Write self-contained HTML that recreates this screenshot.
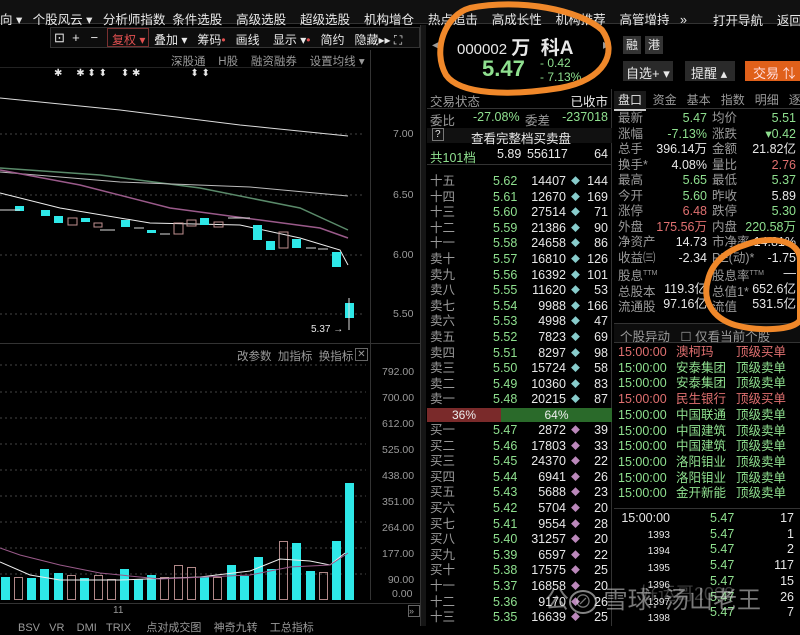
<!DOCTYPE html>
<html><head><meta charset="utf-8"><style>
*{margin:0;padding:0;box-sizing:border-box}
body{width:800px;height:626px;background:#000;overflow:hidden;position:relative;font-family:"Liberation Sans","Noto Sans CJK SC",sans-serif;font-size:12px;color:#ccc}
.a{position:absolute;white-space:nowrap}
.g{color:#8fe08f}.w{color:#e8e8e8}.gr{color:#9a9a9a}.r{color:#e07070}
.row{position:absolute;left:427px;width:185px;height:15px;font-size:12.5px}
.row span{position:absolute;top:0}
</style></head><body>
<!-- top menu -->
<div class="a" style="left:0;top:0;width:800px;height:24px;background:#111;border-bottom:1px solid #333"></div>
<div class="a w" style="left:0;top:9px;font-size:12.5px">向 ▾&nbsp;&nbsp;&nbsp;个股风云 ▾&nbsp;&nbsp;&nbsp;分析师指数&nbsp;&nbsp;条件选股&nbsp;&nbsp;&nbsp;&nbsp;高级选股&nbsp;&nbsp;&nbsp;&nbsp;超级选股&nbsp;&nbsp;&nbsp;&nbsp;机构增仓&nbsp;&nbsp;&nbsp;&nbsp;热点追击&nbsp;&nbsp;&nbsp;&nbsp;高成长性&nbsp;&nbsp;&nbsp;&nbsp;机构推荐&nbsp;&nbsp;&nbsp;&nbsp;高管增持&nbsp;&nbsp;&nbsp;»</div>
<div class="a w" style="left:713px;top:10px;font-size:12.5px">打开导航&nbsp;&nbsp;&nbsp;&nbsp;返回</div>
<!-- toolbar -->
<div class="a" style="left:50px;top:27px;width:370px;height:21px;border:1px solid #333;background:#0d0d0d"></div>
<div class="a w" style="left:54px;top:30px;font-size:13px">⊡&nbsp;&nbsp;+&nbsp;&nbsp;&nbsp;−</div>
<div class="a" style="left:107px;top:28px;width:42px;height:19px;border:1px solid #7a3030;color:#e05050;padding:2px 4px">复权 ▾</div>
<div class="a w" style="left:154px;top:31px">叠加 ▾&nbsp;&nbsp;&nbsp;筹码<span style="color:#e05050">•</span>&nbsp;&nbsp;&nbsp;画线&nbsp;&nbsp;&nbsp;&nbsp;显示 ▾<span style="color:#e05050">•</span>&nbsp;&nbsp;&nbsp;简约&nbsp;&nbsp;&nbsp;隐藏▸▸&nbsp;⛶</div>
<div class="a gr" style="left:171px;top:53px;font-size:11.5px">深股通&nbsp;&nbsp;&nbsp;&nbsp;H股&nbsp;&nbsp;&nbsp;&nbsp;融资融券&nbsp;&nbsp;&nbsp;&nbsp;设置均线 ▾</div>
<div class="a" style="left:0;top:67px;width:362px;border-top:1px solid #222"></div>
<div class="a w" style="left:54px;top:68px;font-size:10px">✱&nbsp;&nbsp;&nbsp;&nbsp;&nbsp;✱ ⬍ ⬍&nbsp;&nbsp;&nbsp;&nbsp;&nbsp;⬍ ✱&nbsp;&nbsp;&nbsp;&nbsp;&nbsp;&nbsp;&nbsp;&nbsp;&nbsp;&nbsp;&nbsp;&nbsp;&nbsp;&nbsp;&nbsp;&nbsp;&nbsp;&nbsp;⬍ ⬍</div>
<div class="a" style="left:370px;top:50px;height:290px;border-left:1px solid #333"></div>
<div class="a" style="left:370px;top:340px;height:260px;border-left:1px solid #333"></div>
<svg class="a" style="left:0;top:90px" width="420" height="250">
<g stroke="#444" stroke-dasharray="2,3"><line x1="0" y1="44" x2="362" y2="44"/><line x1="0" y1="105" x2="362" y2="105"/><line x1="0" y1="165" x2="362" y2="165"/><line x1="0" y1="224" x2="362" y2="224"/></g>
<polyline fill="none" stroke="#ddd" points="0,8 120,20 240,35 348,46"/>
<polyline fill="none" stroke="#5a8a6a" stroke-width="1.5" points="0,78 100,85 200,98 300,118 348,140"/>
<polyline fill="none" stroke="#bbb" points="0,82 120,92 250,97 348,106"/>
<polyline fill="none" stroke="#9a5a8a" stroke-width="1.5" points="0,80 80,95 170,118 260,130 320,138 348,148"/>
<polyline fill="none" stroke="#eee" points="0,103 60,118 150,133 240,135 300,148 340,160 348,175"/>
<g fill="#2ee8e8">
<rect x="15" y="116" width="9" height="5"/><rect x="41" y="120" width="9" height="6"/><rect x="54" y="126" width="9" height="7"/><rect x="81" y="128" width="9" height="4"/><rect x="121" y="130" width="9" height="7"/><rect x="147" y="140" width="9" height="3"/><rect x="200" y="128" width="9" height="7"/><rect x="253" y="135" width="9" height="15"/><rect x="266" y="151" width="9" height="9"/><rect x="292" y="149" width="9" height="9"/><rect x="332" y="162" width="9" height="15"/><rect x="345" y="213" width="9" height="15"/></g>
<g fill="none" stroke="#c09090"><rect x="68" y="128" width="9" height="7"/><rect x="94" y="133" width="8" height="4"/><rect x="174" y="133" width="9" height="11"/><rect x="187" y="130" width="9" height="6"/><rect x="214" y="132" width="9" height="5"/><rect x="279" y="142" width="9" height="16"/></g>
<g stroke="#ddd"><line x1="0" y1="120" x2="20" y2="120"/><line x1="100" y1="140" x2="115" y2="140"/><line x1="134" y1="138" x2="144" y2="138"/><line x1="160" y1="144" x2="170" y2="144"/><line x1="228" y1="128" x2="250" y2="128"/><line x1="306" y1="158" x2="316" y2="158"/><line x1="318" y1="159" x2="328" y2="159"/><line x1="349" y1="208" x2="349" y2="240"/></g>
</svg>
<div class="a w" style="left:311px;top:324px;font-size:10px">5.37 →</div>
<div class="a gr" style="left:393px;top:128px;font-size:10.5px">7.00</div>
<div class="a gr" style="left:393px;top:189px;font-size:10.5px">6.50</div>
<div class="a gr" style="left:393px;top:249px;font-size:10.5px">6.00</div>
<div class="a gr" style="left:393px;top:308px;font-size:10.5px">5.50</div>
<div class="a" style="left:0;top:343px;width:420px;border-top:1px solid #333"></div>
<div class="a gr" style="left:237px;top:348px;font-size:11.5px">改参数&nbsp;&nbsp;加指标&nbsp;&nbsp;换指标</div>
<div class="a gr" style="left:355px;top:348px;width:13px;height:13px;border:1px solid #666;font-size:10px;text-align:center;line-height:11px">✕</div>
<svg class="a" style="left:0;top:355px" width="370" height="250">
<g stroke="#444" stroke-dasharray="2,3"><line x1="0" y1="10" x2="366" y2="10"/><line x1="0" y1="37" x2="366" y2="37"/><line x1="0" y1="63" x2="366" y2="63"/><line x1="0" y1="89" x2="366" y2="89"/><line x1="0" y1="115" x2="366" y2="115"/><line x1="0" y1="141" x2="366" y2="141"/><line x1="0" y1="167" x2="366" y2="167"/><line x1="0" y1="193" x2="366" y2="193"/><line x1="0" y1="219" x2="366" y2="219"/></g>
<g fill="#2ee8e8"><rect x="1" y="222" width="9" height="23"/><rect x="27" y="223" width="9" height="22"/><rect x="40" y="214" width="9" height="31"/><rect x="54" y="218" width="9" height="27"/><rect x="80" y="223" width="9" height="22"/><rect x="120" y="214" width="9" height="31"/><rect x="134" y="224" width="9" height="21"/><rect x="147" y="220" width="9" height="25"/><rect x="200" y="222" width="9" height="23"/><rect x="227" y="210" width="9" height="35"/><rect x="240" y="221" width="9" height="24"/><rect x="254" y="202" width="9" height="43"/><rect x="267" y="214" width="9" height="31"/><rect x="292" y="188" width="9" height="57"/><rect x="306" y="216" width="9" height="29"/><rect x="332" y="186" width="9" height="59"/><rect x="345" y="128" width="9" height="117"/></g>
<g fill="none" stroke="#b08888"><rect x="14.5" y="222.5" width="8" height="22"/><rect x="67.5" y="220.5" width="8" height="24"/><rect x="94.5" y="220.5" width="8" height="24"/><rect x="107.5" y="224.5" width="8" height="20"/><rect x="160.5" y="222.5" width="8" height="22"/><rect x="174.5" y="210.5" width="8" height="34"/><rect x="187.5" y="212.5" width="8" height="32"/><rect x="213.5" y="222.5" width="8" height="22"/><rect x="279.5" y="186.5" width="8" height="58"/><rect x="319.5" y="217.5" width="8" height="27"/></g>
<polyline fill="none" stroke="#eee" points="0,207 30,220 60,225 120,225 200,222 250,216 280,204 310,206 330,210 345,198"/>
<polyline fill="none" stroke="#9a5a8a" points="0,193 20,200 60,210 100,218 160,224 250,220 290,212 330,210 348,198"/>
</svg>
<div class="a gr" style="left:382px;top:359px;font-size:10.5px;line-height:26px">792.00<br>700.00<br>612.00<br>525.00<br>438.00<br>351.00<br>264.00<br>177.00<br>&nbsp;&nbsp;90.00</div>
<div class="a gr" style="left:392px;top:588px;font-size:10.5px">0.00</div>
<div class="a" style="left:0;top:603px;width:420px;border-top:1px solid #333"></div>
<div class="a gr" style="left:113px;top:605px;font-size:10px">11</div>
<div class="a gr" style="left:408px;top:605px;width:12px;height:12px;border:1px solid #666;font-size:9px">»</div>
<div class="a gr" style="left:18px;top:619px;font-size:11px">BSV&nbsp;&nbsp;&nbsp;VR&nbsp;&nbsp;&nbsp;&nbsp;DMI&nbsp;&nbsp;&nbsp;TRIX&nbsp;&nbsp;&nbsp;&nbsp;&nbsp;点对成交图&nbsp;&nbsp;&nbsp;&nbsp;神奇九转&nbsp;&nbsp;&nbsp;&nbsp;工总指标</div>
<!-- divider -->
<div class="a" style="left:420px;top:25px;width:6px;height:601px;background:#151515;border-left:1px solid #333"></div>
<!-- header stock -->
<div class="a w" style="left:457px;top:33px;font-size:15px">000002 <b style="font-size:19px">万&nbsp;&nbsp;科A</b></div>
<div class="a g" style="left:482px;top:56px;font-size:22px;font-weight:bold">5.47</div>
<div class="a g" style="left:540px;top:56px;font-size:12px;line-height:14px">- 0.42<br>- 7.13%</div>
<div class="a gr" style="left:432px;top:36px;font-size:14px">◂</div><div class="a gr" style="left:603px;top:36px;font-size:14px">▸</div>
<div class="a w" style="left:623px;top:36px;width:18px;height:18px;background:#333;text-align:center;line-height:18px">融</div>
<div class="a w" style="left:645px;top:36px;width:18px;height:18px;background:#333;text-align:center;line-height:18px">港</div>
<div class="a w" style="left:623px;top:61px;width:50px;height:20px;background:#2a2a2a;padding:2px 3px;font-size:13px">自选+ ▾</div>
<div class="a w" style="left:685px;top:61px;width:50px;height:20px;background:#2a2a2a;padding:2px 6px;font-size:13px">提醒 ▴</div>
<div class="a" style="left:745px;top:61px;width:55px;height:20px;background:#e0601a;color:#fdd;padding:2px 8px;font-size:13px">交易 ⇅</div>
<!-- order book -->
<div class="a" style="left:427px;top:89px;width:185px;height:537px;border-right:1px solid #333"></div>
<div class="row gr" style="top:91px;border-bottom:1px solid #333;height:18px"><span style="left:3px">交易状态</span><span class="w" style="right:4px">已收市</span></div>
<div class="row" style="top:110px"><span class="gr" style="left:3px">委比</span><span class="g" style="left:46px">-27.08%</span><span class="gr" style="left:98px">委差</span><span class="g" style="right:4px">-237018</span></div>
<div class="row w" style="top:128px;background:#111"><span style="left:5px;border:1px solid #777;padding:0 2px;font-size:10px">?</span><span style="left:44px">查看完整档买卖盘</span></div>
<div class="row" style="top:147px;border-bottom:1px solid #333;height:18px"><span class="g" style="left:3px">共101档</span><span class="w" style="left:70px">5.89</span><span class="w" style="left:100px">556117</span><span class="w" style="right:4px">64</span></div>
<div class="a" style="left:427px;top:174px;width:185px;font-size:12.5px;line-height:15.6px">
<div style="position:relative">
<div class="gr" style="position:absolute;left:3px">十五<br>十四<br>十三<br>十二<br>十一<br>卖十<br>卖九<br>卖八<br>卖七<br>卖六<br>卖五<br>卖四<br>卖三<br>卖二<br>卖一</div>
<div class="g" style="position:absolute;left:66px">5.62<br>5.61<br>5.60<br>5.59<br>5.58<br>5.57<br>5.56<br>5.55<br>5.54<br>5.53<br>5.52<br>5.51<br>5.50<br>5.49<br>5.48</div>
<div class="w" style="position:absolute;right:46px;text-align:right">14407<br>12670<br>27514<br>21386<br>24658<br>16810<br>16392<br>11620<br>9988<br>4998<br>7823<br>8297<br>15724<br>10360<br>20215</div>
<div style="position:absolute;left:144px;color:#8cc;font-size:9px;line-height:15.6px">◆<br>◆<br>◆<br>◆<br>◆<br>◆<br>◆<br>◆<br>◆<br>◆<br>◆<br>◆<br>◆<br>◆<br>◆</div>
<div class="w" style="position:absolute;right:4px;text-align:right">144<br>169<br>71<br>90<br>86<br>126<br>101<br>53<br>166<br>47<br>69<br>98<br>58<br>83<br>87</div>
</div></div>
<div class="a" style="left:427px;top:408px;width:74px;height:14px;background:#7a2a2a;color:#eee;text-align:center;font-size:12px">36%</div>
<div class="a" style="left:501px;top:408px;width:111px;height:14px;background:#2a6a2a;color:#eee;text-align:center;font-size:12px">64%</div>
<div class="a" style="left:427px;top:423px;width:185px;font-size:12.5px;line-height:15.6px">
<div style="position:relative">
<div class="gr" style="position:absolute;left:3px">买一<br>买二<br>买三<br>买四<br>买五<br>买六<br>买七<br>买八<br>买九<br>买十<br>十一<br>十二<br>十三</div>
<div class="g" style="position:absolute;left:66px">5.47<br>5.46<br>5.45<br>5.44<br>5.43<br>5.42<br>5.41<br>5.40<br>5.39<br>5.38<br>5.37<br>5.36<br>5.35</div>
<div class="w" style="position:absolute;right:46px;text-align:right">2872<br>17803<br>24370<br>6941<br>5688<br>5704<br>9554<br>31257<br>6597<br>17575<br>16858<br>9170<br>16639</div>
<div style="position:absolute;left:144px;color:#b8b;font-size:9px;line-height:15.6px">◆<br>◆<br>◆<br>◆<br>◆<br>◆<br>◆<br>◆<br>◆<br>◆<br>◆<br>◆<br>◆</div>
<div class="w" style="position:absolute;right:4px;text-align:right">39<br>33<br>22<br>26<br>23<br>20<br>28<br>20<br>22<br>25<br>20<br>26<br>25</div>
</div></div>
<!-- right stats -->
<div class="a" style="left:614px;top:89px;width:186px;height:20px;border-bottom:1px solid #333"></div>
<div class="a gr" style="left:614px;top:91px;font-size:12px"><span class="w" style="background:#1a1a1a;padding:2px 4px;border-bottom:2px solid #ccc">盘口</span>&nbsp;&nbsp;资金&nbsp;&nbsp;&nbsp;基本&nbsp;&nbsp;&nbsp;指数&nbsp;&nbsp;&nbsp;明细&nbsp;&nbsp;&nbsp;逐笔</div>
<div class="a" style="left:618px;top:111px;width:180px;font-size:12.5px;line-height:15.5px">
<div style="position:relative">
<div class="gr" style="position:absolute;left:0">最新<br>涨幅<br>总手<br>换手*<br>最高<br>今开<br>涨停<br>外盘<br>净资产<br>收益㈢<br>股息<sup style="font-size:7px">TTM</sup><br>总股本<br>流通股</div>
<div style="position:absolute;right:91px;text-align:right"><span class="g">5.47</span><br><span class="g">-7.13%</span><br><span class="w">396.14万</span><br><span class="w">4.08%</span><br><span class="g">5.65</span><br><span class="g">5.60</span><br><span class="r">6.48</span><br><span class="r">175.56万</span><br><span class="w">14.73</span><br><span class="w">-2.34</span><br><span class="w">&nbsp;</span><br><span class="w">119.3亿</span><br><span class="w">97.16亿</span></div>
<div class="gr" style="position:absolute;left:94px">均价<br>涨跌<br>金额<br>量比<br>最低<br>昨收<br>跌停<br>内盘<br>市净率<br>PE(动)*<br>股息率<sup style="font-size:7px">TTM</sup><br>总值1*<br>流值</div>
<div style="position:absolute;right:2px;text-align:right"><span class="g">5.51</span><br><span class="g">▾0.42</span><br><span class="w">21.82亿</span><br><span class="r">2.76</span><br><span class="g">5.37</span><br><span class="w">5.89</span><br><span class="g">5.30</span><br><span class="g">220.58万</span><br><span class="w">14.81%</span><br><span class="w">-1.75</span><br><span class="w">—</span><br><span class="w">652.6亿</span><br><span class="w">531.5亿</span></div>
</div></div>
<div class="a" style="left:614px;top:323px;width:186px;height:20px;border-top:1px solid #333;border-bottom:1px solid #333;background:#0d0d0d"></div>
<div class="a gr" style="left:620px;top:326px;font-size:12.5px">个股异动&nbsp;&nbsp;&nbsp;☐ 仅看当前个股</div>
<div class="a" style="left:618px;top:345px;width:180px;font-size:12.5px;line-height:15.7px">
<div style="position:relative">
<div class="g" style="position:absolute;left:0"><span class="r">15:00:00</span><br>15:00:00<br>15:00:00<br><span class="r">15:00:00</span><br>15:00:00<br>15:00:00<br>15:00:00<br>15:00:00<br>15:00:00<br>15:00:00</div>
<div class="g" style="position:absolute;left:58px"><span class="r">澳柯玛</span><br>安泰集团<br>安泰集团<br><span class="r">民生银行</span><br>中国联通<br>中国建筑<br>中国建筑<br>洛阳钼业<br>洛阳钼业<br>金开新能</div>
<div class="g" style="position:absolute;left:118px"><span class="r">顶级买单</span><br>顶级卖单<br>顶级卖单<br><span class="r">顶级买单</span><br>顶级卖单<br>顶级卖单<br>顶级卖单<br>顶级卖单<br>顶级卖单<br>顶级卖单</div>
</div></div>
<div class="a" style="left:614px;top:508px;width:186px;border-top:1px solid #333"></div>
<div class="a" style="left:618px;top:511px;width:180px;font-size:12.5px;line-height:15.7px">
<div style="position:relative">
<div class="w" style="position:absolute;left:0;text-align:right;width:52px">15:00:00<br><span style="font-size:10px">1393</span><br><span style="font-size:10px">1394</span><br><span style="font-size:10px">1395</span><br><span style="font-size:10px">1396</span><br><span style="font-size:10px">1397</span><br><span style="font-size:10px">1398</span></div>
<div class="g" style="position:absolute;left:92px">5.47<br>5.47<br>5.47<br>5.47<br>5.47<br>5.47<br>5.47</div>
<div class="w" style="position:absolute;right:4px;text-align:right">17<br>1<br>2<br>117<br>15<br>26<br>7</div>
</div></div>
<!-- watermark -->
<div class="a" style="left:545px;top:580px;font-size:24px;color:rgba(220,220,220,0.55)">公<span style="border:2px solid rgba(220,220,220,.6);border-radius:50%;padding:0 3px;font-size:18px">⊘</span> 雪球: 汤山老王</div>
<div class="a" style="left:640px;top:580px;font-size:18px;color:rgba(200,200,200,0.3)">好运哥2008</div>
<!-- orange circles -->
<svg class="a" style="left:0;top:0" width="800" height="626">
<path d="M470,8 C520,-2 580,10 602,30 C618,52 605,80 560,88 C510,96 460,95 446,75 C432,50 445,15 470,8 Z" fill="none" stroke="#f0882a" stroke-width="6"/>
<path d="M745,245 C770,235 800,240 800,260 L800,320 C795,330 760,332 735,325 C712,318 702,300 708,280 C712,262 728,250 745,245 Z" fill="none" stroke="#f0882a" stroke-width="6"/>
</svg>
</body></html>
